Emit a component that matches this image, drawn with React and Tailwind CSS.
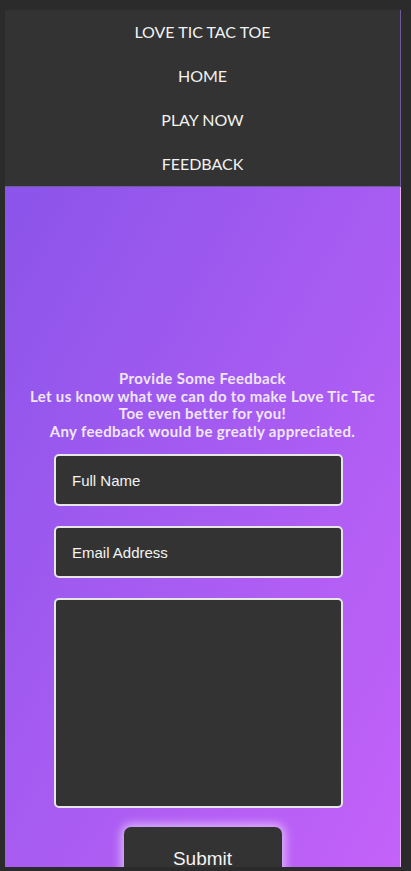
export default function App() {
  const nav = ['LOVE TIC TAC TOE', 'HOME', 'PLAY NOW', 'FEEDBACK'];
  return (
    <div className="h-[871px] overflow-hidden bg-[#2b2b2b] pt-[10px] pl-[5px] pr-[10px] pb-[4px] flex flex-col">
      <div className="flex-1 flex flex-col overflow-hidden">
        <nav className="bg-[#333333] border-r border-b border-[#6f5a9a] flex flex-col">
          {nav.map((item) => (
            <a
              key={item}
              className="py-[12px] leading-[20px] text-center text-[16px] text-[#f2f2f2] font-['Lato','Open_Sans',sans-serif]"
            >
              {item}
            </a>
          ))}
        </nav>

        <section className="flex-1 bg-gradient-to-br from-[#8b54ea] to-[#c562f9] border-r border-[#e6b0ff] pt-[183px] flex flex-col">
          <div className="text-center text-[15px] leading-[17.5px] font-bold tracking-[0.35px] text-[#efe6fb] font-['Lato','Open_Sans',sans-serif] px-[20px]">
            <p>Provide Some Feedback</p>
            <p>Let us know what we can do to make Love Tic Tac Toe even better for you!</p>
            <p>Any feedback would be greatly appreciated.</p>
          </div>

          <form className="mt-[14px] flex flex-col">
            <input
              placeholder="Full Name"
              className="ml-[49px] w-[289px] h-[52px] rounded-[5px] border-2 border-[#e6e6e6] bg-[#333333] px-[16px] text-[15px] text-white placeholder:text-[#f4f4f4] font-['Liberation_Sans',Arial,sans-serif] outline-none"
            />
            <input
              placeholder="Email Address"
              className="mt-[20px] ml-[49px] w-[289px] h-[52px] rounded-[5px] border-2 border-[#e6e6e6] bg-[#333333] px-[16px] text-[15px] text-white placeholder:text-[#f4f4f4] font-['Liberation_Sans',Arial,sans-serif] outline-none"
            />
            <textarea className="mt-[20px] ml-[49px] w-[289px] h-[210px] rounded-[5px] border-2 border-[#e6e6e6] bg-[#333333] px-[16px] py-[12px] text-[15px] text-white font-['Liberation_Sans',Arial,sans-serif] outline-none resize-none" />
            <button
              type="button"
              className="mt-[19px] self-center w-[158px] h-[64px] rounded-[7px] bg-[#333333] text-[19px] text-[#f4f4f4] font-['Liberation_Sans',Arial,sans-serif] shadow-[0_0_10px_3px_rgba(255,255,255,0.55)]"
            >
              Submit
            </button>
          </form>
        </section>
      </div>
    </div>
  );
}
